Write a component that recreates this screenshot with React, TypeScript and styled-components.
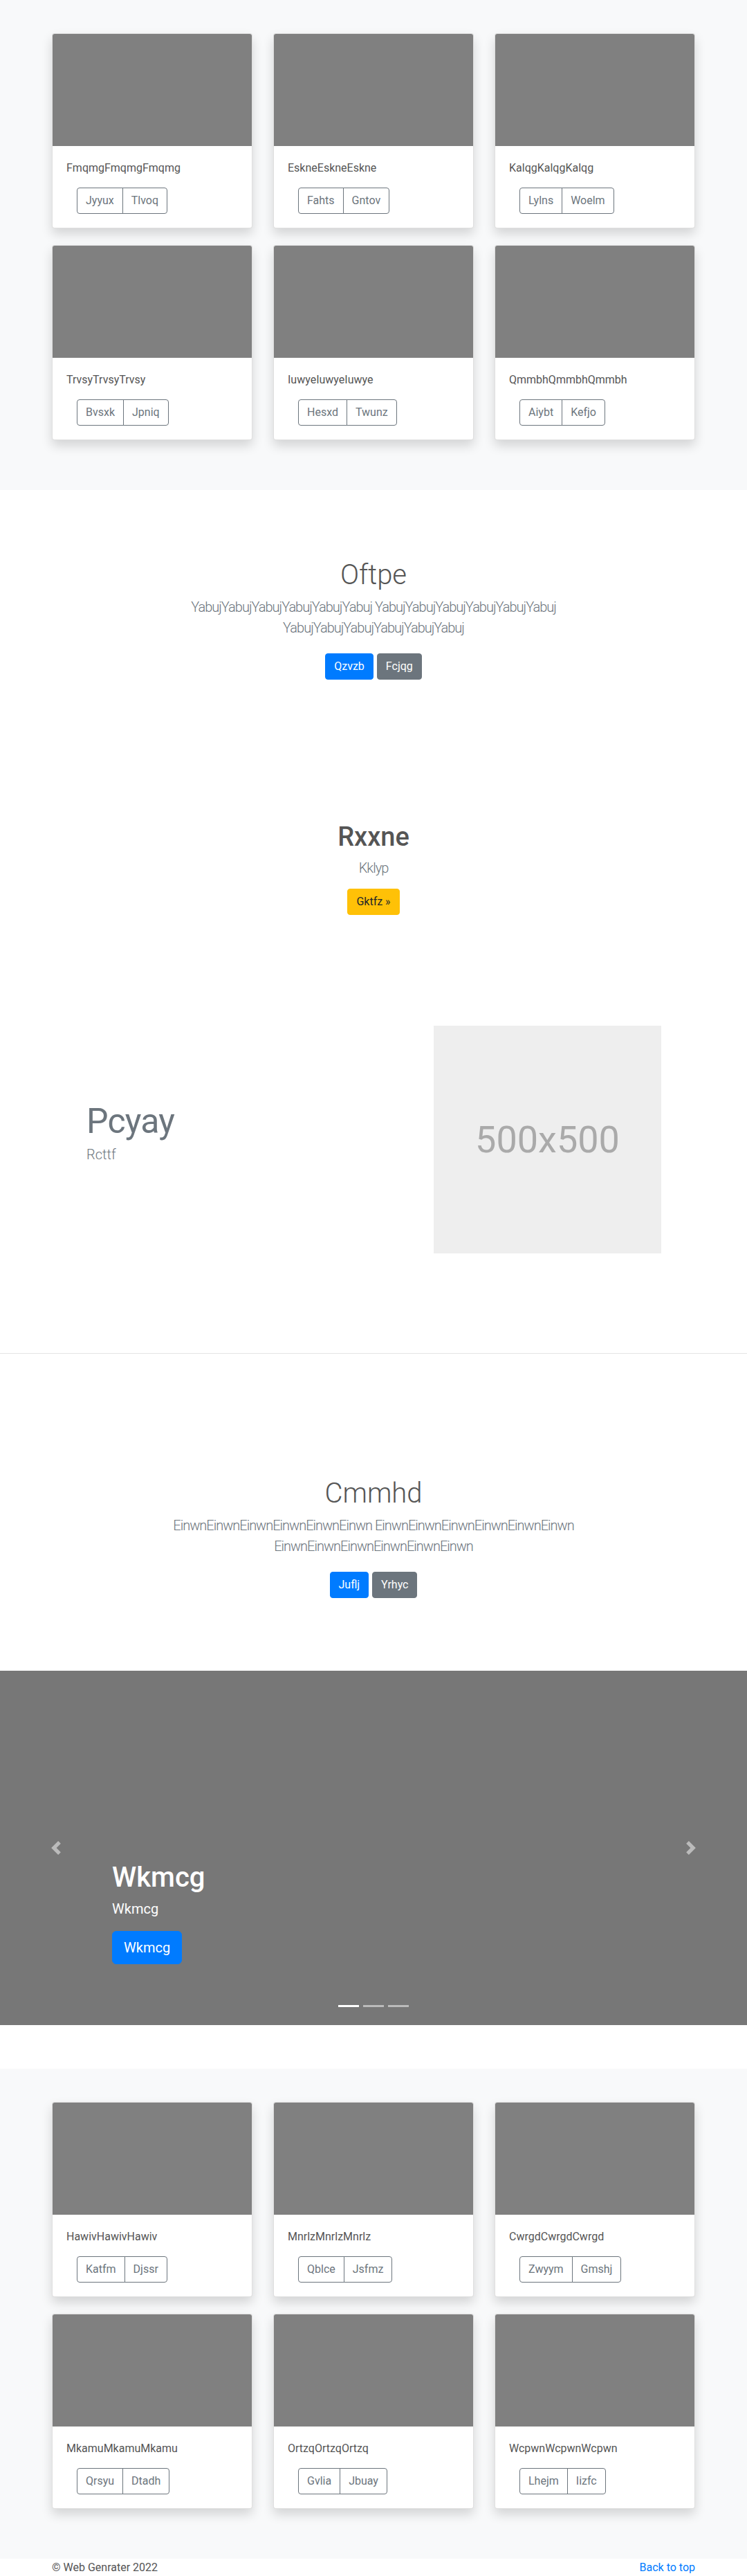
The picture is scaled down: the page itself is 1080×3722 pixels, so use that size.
import React from "react";
import styled, { createGlobalStyle, css } from "styled-components";

const GlobalStyle = createGlobalStyle`
  *, *::before, *::after { box-sizing: border-box; }
  html, body { margin: 0; padding: 0; }
  body {
    font-family: Roboto, "Liberation Sans", Arial, sans-serif;
    font-size: 16px;
    line-height: 1.5;
    color: #555;
    background: #fff;
  }
`;

const Page = styled.div`
  width: 100%;
`;

/* ---------- Album ---------- */

const Album = styled.section`
  background: #f8f9fa;
  padding: 48px 0 72px;
`;

const Container = styled.div`
  width: 930px;
  margin: 0 auto;
`;

const CardGrid = styled.div`
  display: grid;
  grid-template-columns: repeat(3, 290px);
  column-gap: 30px;
  row-gap: 24px;
`;

const Card = styled.div`
  background: #fff;
  border: 1px solid rgba(0, 0, 0, 0.125);
  border-radius: 4px;
  box-shadow: 0 8px 16px rgba(0, 0, 0, 0.15);
  overflow: hidden;
`;

const Thumb = styled.div`
  height: 162px;
  background: #808080;
`;

const CardBody = styled.div`
  padding: 20px;
`;

const CardText = styled.p`
  margin: 0 0 16px;
  font-size: 16px;
  line-height: 24px;
`;

const BtnGroup = styled.div`
  display: inline-flex;
  margin-left: 15px;
`;

const OutlineBtn = styled.button`
  font-family: inherit;
  font-size: 16px;
  line-height: 24px;
  padding: 6px 12px;
  background: transparent;
  color: #6c757d;
  border: 1px solid #6c757d;
  cursor: pointer;
  &:first-child {
    border-radius: 4px 0 0 4px;
  }
  &:last-child {
    border-radius: 0 4px 4px 0;
    margin-left: -1px;
  }
`;

/* ---------- Hero blocks ---------- */

const Hero = styled.section<{ $top: number; $bottom: number }>`
  padding: ${(p) => p.$top}px 0 ${(p) => p.$bottom}px;
  text-align: center;
`;

const HeroTitle = styled.h1<{ $strong?: boolean }>`
  margin: 0 0 7px;
  font-size: 40px;
  line-height: 48px;
  font-weight: 300;
  color: #555;
  ${(p) =>
    p.$strong &&
    css`
      font-size: 38px;
      line-height: 46px;
      font-weight: 500;
    `}
`;

const Lead = styled.p<{ $gap: number }>`
  margin: 0 auto ${(p) => p.$gap}px;
  max-width: 700px;
  font-size: 20px;
  line-height: 30px;
  font-weight: 300;
  letter-spacing: -1px;
  color: #6c757d;
`;

const BtnRow = styled.div`
  display: flex;
  justify-content: center;
  gap: 5px;
`;

type Variant = "primary" | "secondary" | "warning";

const variantColors: Record<Variant, { bg: string; fg: string }> = {
  primary: { bg: "#007bff", fg: "#fff" },
  secondary: { bg: "#6c757d", fg: "#fff" },
  warning: { bg: "#ffc107", fg: "#212529" },
};

const Btn = styled.button<{ $variant: Variant; $large?: boolean }>`
  font-family: inherit;
  font-size: ${(p) => (p.$large ? 20 : 16)}px;
  line-height: ${(p) => (p.$large ? 30 : 24)}px;
  padding: ${(p) => (p.$large ? "8px 16px" : "6px 12px")};
  border-radius: ${(p) => (p.$large ? 6 : 4)}px;
  background: ${(p) => variantColors[p.$variant].bg};
  border: 1px solid ${(p) => variantColors[p.$variant].bg};
  color: ${(p) => variantColors[p.$variant].fg};
  cursor: pointer;
`;

/* ---------- Feature ---------- */

const Feature = styled.section`
  padding: 80px 0 144px;
  border-bottom: 1px solid rgba(0, 0, 0, 0.1);
`;

const FeatureRow = styled.div`
  width: 930px;
  margin: 0 auto;
  padding: 0 49px 0 50px;
  display: flex;
  align-items: center;
  justify-content: space-between;
`;

const FeatureText = styled.div`
  display: flex;
  flex-direction: column;
`;

const FeatureHeading = styled.h2`
  margin: 0 0 8px;
  font-size: 50px;
  line-height: 50px;
  font-weight: 400;
  letter-spacing: -0.8px;
  color: #6c757d;
`;

const FeatureLead = styled.p`
  margin: 0 0 16px;
  font-size: 20px;
  line-height: 30px;
  font-weight: 300;
  color: #6c757d;
`;

const Placeholder = styled.div`
  width: 329px;
  height: 329px;
  background: #eeeeee;
  color: #aaaaaa;
  display: flex;
  align-items: center;
  justify-content: center;
  font-size: 54px;
`;

/* ---------- Carousel ---------- */

const Carousel = styled.section`
  position: relative;
  height: 512px;
  background: #777;
  margin-bottom: 63px;
`;

const Control = styled.span<{ $side: "left" | "right" }>`
  position: absolute;
  top: 0;
  bottom: 0;
  ${(p) => p.$side}: 0;
  width: 15%;
  display: flex;
  align-items: center;
  justify-content: center;
  opacity: 0.5;
`;

const Caption = styled.div`
  position: absolute;
  left: 15%;
  right: 15%;
  bottom: 48px;
  padding: 20px 0;
  color: #fff;
  text-align: left;
`;

const CaptionTitle = styled.h1`
  margin: 0 0 6px;
  font-size: 40px;
  line-height: 48px;
  font-weight: 500;
`;

const CaptionText = styled.p`
  margin: 0 0 17px;
  font-size: 20px;
  line-height: 30px;
`;

const CaptionAction = styled.div`
  display: flex;
  margin-bottom: 20px;
`;

const Indicators = styled.ol`
  position: absolute;
  left: 0;
  right: 0;
  bottom: 0;
  margin: 0 0 16px;
  padding: 0;
  list-style: none;
  display: flex;
  justify-content: center;
  gap: 6px;
`;

const Indicator = styled.li<{ $active?: boolean }>`
  width: 30px;
  height: 3px;
  margin: 10px 0;
  background: #fff;
  opacity: ${(p) => (p.$active ? 1 : 0.5)};
`;

/* ---------- Footer ---------- */

const Footer = styled.footer`
  height: 25px;
`;

const FooterInner = styled.div`
  width: 930px;
  height: 100%;
  margin: 0 auto;
  display: flex;
  align-items: center;
  justify-content: space-between;
  font-size: 16px;
  line-height: 24px;
  color: #555;
`;

const BackLink = styled.a`
  color: #007bff;
  text-decoration: none;
`;

/* ---------- Data ---------- */

type CardData = { title: string; a: string; b: string };

const album1: CardData[] = [
  { title: "FmqmgFmqmgFmqmg", a: "Jyyux", b: "Tlvoq" },
  { title: "EskneEskneEskne", a: "Fahts", b: "Gntov" },
  { title: "KalqgKalqgKalqg", a: "Lylns", b: "Woelm" },
  { title: "TrvsyTrvsyTrvsy", a: "Bvsxk", b: "Jpniq" },
  { title: "IuwyeIuwyeIuwye", a: "Hesxd", b: "Twunz" },
  { title: "QmmbhQmmbhQmmbh", a: "Aiybt", b: "Kefjo" },
];

const album2: CardData[] = [
  { title: "HawivHawivHawiv", a: "Katfm", b: "Djssr" },
  { title: "MnrlzMnrlzMnrlz", a: "Qblce", b: "Jsfmz" },
  { title: "CwrgdCwrgdCwrgd", a: "Zwyym", b: "Gmshj" },
  { title: "MkamuMkamuMkamu", a: "Qrsyu", b: "Dtadh" },
  { title: "OrtzqOrtzqOrtzq", a: "Gvlia", b: "Jbuay" },
  { title: "WcpwnWcpwnWcpwn", a: "Lhejm", b: "Iizfc" },
];

const AlbumSection = ({ cards }: { cards: CardData[] }) => (
  <Album>
    <Container>
      <CardGrid>
        {cards.map((c) => (
          <Card key={c.title}>
            <Thumb />
            <CardBody>
              <CardText>{c.title}</CardText>
              <BtnGroup>
                <OutlineBtn>{c.a}</OutlineBtn>
                <OutlineBtn>{c.b}</OutlineBtn>
              </BtnGroup>
            </CardBody>
          </Card>
        ))}
      </CardGrid>
    </Container>
  </Album>
);

const ChevronLeft = () => (
  <svg width="20" height="20" viewBox="0 0 8 8" fill="#fff">
    <path d="M5.25 0l-4 4 4 4 1.5-1.5L4.25 4l2.5-2.5L5.25 0z" />
  </svg>
);

const ChevronRight = () => (
  <svg width="20" height="20" viewBox="0 0 8 8" fill="#fff">
    <path d="M2.75 0l-1.5 1.5L3.75 4l-2.5 2.5L2.75 8l4-4-4-4z" />
  </svg>
);

const yabuj = "YabujYabujYabujYabujYabujYabuj";
const einwn = "EinwnEinwnEinwnEinwnEinwnEinwn";

export default function App() {
  return (
    <Page>
      <GlobalStyle />
      <AlbumSection cards={album1} />

      <Hero $top={99} $bottom={100}>
        <HeroTitle>Oftpe</HeroTitle>
        <Lead $gap={22}>{`${yabuj} ${yabuj} ${yabuj}`}</Lead>
        <BtnRow>
          <Btn $variant="primary">Qzvzb</Btn>
          <Btn $variant="secondary">Fcjqg</Btn>
        </BtnRow>
      </Hero>

      <Hero $top={104} $bottom={80}>
        <HeroTitle $strong>Rxxne</HeroTitle>
        <Lead $gap={15}>Kklyp</Lead>
        <BtnRow>
          <Btn $variant="warning">Gktfz »</Btn>
        </BtnRow>
      </Hero>

      <Feature>
        <FeatureRow>
          <FeatureText>
            <FeatureHeading>Pcyay</FeatureHeading>
            <FeatureLead>Rcttf</FeatureLead>
          </FeatureText>
          <Placeholder>500x500</Placeholder>
        </FeatureRow>
      </Feature>

      <Hero $top={178} $bottom={105}>
        <HeroTitle>Cmmhd</HeroTitle>
        <Lead $gap={22}>{`${einwn} ${einwn} ${einwn}`}</Lead>
        <BtnRow>
          <Btn $variant="primary">Juflj</Btn>
          <Btn $variant="secondary">Yrhyc</Btn>
        </BtnRow>
      </Hero>

      <Carousel>
        <Control $side="left">
          <ChevronLeft />
        </Control>
        <Control $side="right">
          <ChevronRight />
        </Control>
        <Caption>
          <CaptionTitle>Wkmcg</CaptionTitle>
          <CaptionText>Wkmcg</CaptionText>
          <CaptionAction>
            <Btn $variant="primary" $large>
              Wkmcg
            </Btn>
          </CaptionAction>
        </Caption>
        <Indicators>
          <Indicator $active />
          <Indicator />
          <Indicator />
        </Indicators>
      </Carousel>

      <AlbumSection cards={album2} />

      <Footer>
        <FooterInner>
          <span>© Web Genrater 2022</span>
          <BackLink href="#">Back to top</BackLink>
        </FooterInner>
      </Footer>
    </Page>
  );
}
